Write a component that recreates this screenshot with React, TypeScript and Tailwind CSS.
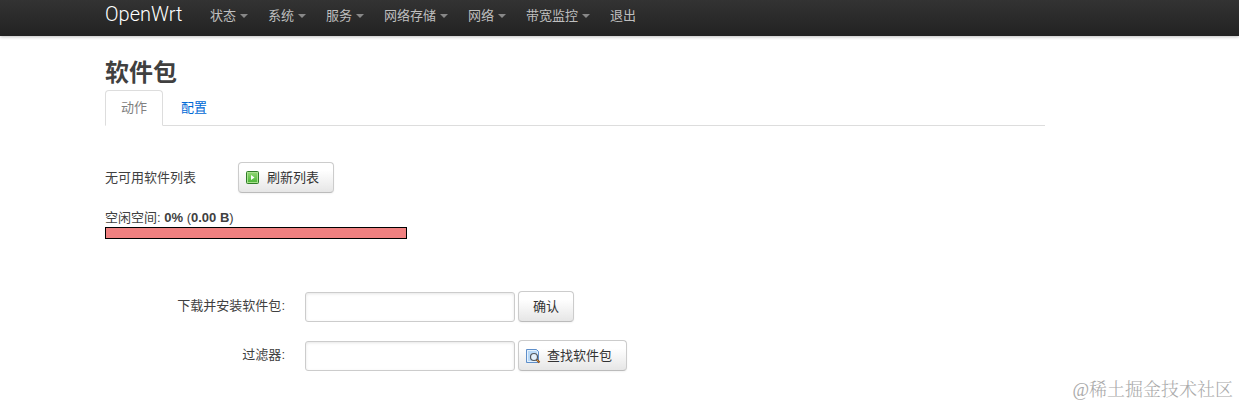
import { useState } from "react";
import type { ReactNode } from "react";

const MENU = [
  { label: "状态", dropdown: true },
  { label: "系统", dropdown: true },
  { label: "服务", dropdown: true },
  { label: "网络存储", dropdown: true },
  { label: "网络", dropdown: true },
  { label: "带宽监控", dropdown: true },
  { label: "退出", dropdown: false },
];

const TABS = ["动作", "配置"];

function ReloadIcon() {
  return (
    <svg className="h-4 w-4" viewBox="0 0 16 16" aria-hidden="true">
      <defs>
        <linearGradient id="reload-fill" x1="0" y1="0" x2="0" y2="1">
          <stop offset="0" stopColor="#8bd46f" />
          <stop offset="1" stopColor="#4fb83a" />
        </linearGradient>
      </defs>
      <rect x="1.5" y="1.5" width="12" height="12" rx="1" fill="#a9e08f" stroke="#2f7d27" />
      <rect x="3" y="3" width="9" height="9" fill="url(#reload-fill)" />
      <path d="M6 5v5l3.5-2.5z" fill="#fff" />
    </svg>
  );
}

function FindIcon() {
  return (
    <svg className="h-4 w-4" viewBox="0 0 16 16" aria-hidden="true">
      <path d="M1.5 1.5h10l2 2v11h-12z" fill="#b9d9f7" stroke="#5f8fca" />
      <path d="M2.5 2.5h8.5l1.5 1.5v9.5h-10z" fill="none" stroke="#e6f2fd" />
      <path d="M11.5 11.5l3 3" stroke="#8a4a16" strokeWidth="2" />
      <path d="M11.5 11.5l2 2" stroke="#e0a13c" strokeWidth="1" />
      <circle cx="9" cy="9" r="3.5" fill="#e4f0fa" stroke="#54585e" strokeWidth="1.2" />
    </svg>
  );
}

function Button({ icon, children }: { icon?: ReactNode; children: ReactNode }) {
  return (
    <button
      type="submit"
      className={`flex h-[31px] items-center rounded border border-[#ccc] border-b-[#bbb] bg-linear-to-b from-white from-25% to-[#e6e6e6] text-[#333] shadow-[inset_0_1px_0_rgba(255,255,255,0.2),0_1px_2px_rgba(0,0,0,0.05)] ${
        icon ? "gap-[6px] pl-[6px] pr-[14px]" : "px-[14px]"
      }`}
    >
      {icon}
      {children}
    </button>
  );
}

function Field({ id, label, children }: { id: string; label: string; children: ReactNode }) {
  const [value, setValue] = useState("");

  return (
    <div className="flex items-end">
      <label htmlFor={id} className="mr-5 w-[180px] self-center pb-px text-right">
        {label}:
      </label>
      <input
        id={id}
        type="text"
        value={value}
        onChange={(e) => setValue(e.target.value)}
        className="mr-[3px] h-[30px] w-[210px] rounded-[3px] border border-[#ccc] px-1 shadow-[inset_0_1px_3px_rgba(0,0,0,0.1)]"
      />
      {children}
    </div>
  );
}

export default function App() {
  const [tab, setTab] = useState(TABS[0]);

  return (
    <div className="bg-white font-['Liberation_Sans','Noto_Sans_CJK_SC',sans-serif] text-[13px] leading-[18px] text-[#404040]">
      <header className="flex h-9 bg-linear-to-b from-[#333] to-[#222] pl-[105px] shadow-[0_1px_3px_rgba(0,0,0,0.25)]">
        <a
          href="#"
          className="w-[105px] pt-1 font-['Roboto','Liberation_Sans',sans-serif] text-xl leading-5 font-light text-white"
        >
          OpenWrt
        </a>
        <nav className="flex gap-5 pt-[7px] text-[#bfbfbf]">
          {MENU.map((item) => (
            <a key={item.label} href="#" className="flex gap-1">
              {item.label}
              {item.dropdown && (
                <span className="mt-[7px] h-0 w-0 border-x-4 border-t-4 border-x-transparent border-t-[#888]" />
              )}
            </a>
          ))}
        </nav>
      </header>

      <main className="ml-[105px] max-w-[940px] pt-[19px]">
        <h2 className="text-2xl leading-[35px] font-bold">软件包</h2>

        <div role="tablist" className="flex h-9 border-b border-[#ddd]">
          {TABS.map((name) => (
            <button
              key={name}
              type="button"
              role="tab"
              aria-selected={name === tab}
              onClick={() => setTab(name)}
              className={`mr-[2px] h-9 rounded-t border px-[15px] ${
                name === tab
                  ? "border-[#ddd] border-b-white bg-white text-[#808080]"
                  : "border-transparent text-[#0069d6]"
              }`}
            >
              {name}
            </button>
          ))}
        </div>

        <form onSubmit={(e) => e.preventDefault()}>
          <div className="mt-9 flex items-center">
            <span className="w-[133px]">无可用软件列表</span>
            <Button icon={<ReloadIcon />}>刷新列表</Button>
          </div>

          <div className="mt-4">
            空闲空间: <strong>0%</strong> (<strong>0.00 B</strong>)
            <div className="h-3 w-[302px] border border-black bg-[#f08080]" />
          </div>

          <div className="mt-[52px] flex flex-col gap-[18px]">
            <Field id="install" label="下载并安装软件包">
              <Button>确认</Button>
            </Field>
            <Field id="filter" label="过滤器">
              <Button icon={<FindIcon />}>查找软件包</Button>
            </Field>
          </div>
        </form>
      </main>

      <footer className="pt-[7px] pr-[6px] text-right font-['Liberation_Serif','Noto_Serif_CJK_SC','Noto_Sans_CJK_SC',serif] text-lg leading-6 font-light text-[#aaa]">
        @稀土掘金技术社区
      </footer>
    </div>
  );
}
